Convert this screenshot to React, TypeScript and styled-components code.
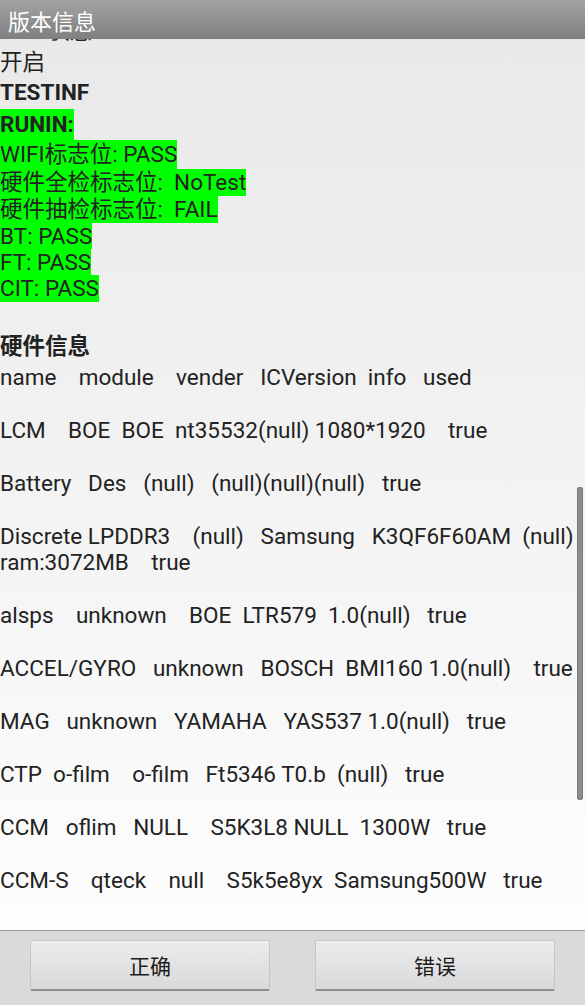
import React, { useLayoutEffect, useRef } from "react";
import styled, { createGlobalStyle } from "styled-components";

const Global = createGlobalStyle`
  html, body { margin: 0; padding: 0; width: 100%; height: 100%; overflow: hidden; }
  body { font-family: Roboto, "Noto Sans CJK SC", sans-serif; }
  #root { height: 100%; }
`;

const Screen = styled.div`
  display: flex;
  flex-direction: column;
  width: 585px;
  height: 1005px;
`;

const TitleBar = styled.header`
  flex: none;
  height: 39px;
  display: flex;
  align-items: center;
  padding-left: 8px;
  background: linear-gradient(#a3a3a3, #7f7f7f);
  color: #ffffff;
  font-family: "Noto Sans CJK SC", sans-serif;
  font-size: 22px;
`;

const Body = styled.div`
  position: relative;
  flex: 1;
  min-height: 0;
  background: linear-gradient(#e9e9e9, #fdfdfd);
`;

const Scroller = styled.div`
  height: 100%;
  overflow: hidden;
`;

const Content = styled.div`
  color: #222222;
  font-size: 22.5px;
  padding-bottom: 40px;
`;

const Line = styled.div<{ $h?: number; $bold?: boolean; $gap?: number }>`
  line-height: ${(p) => p.$h ?? 26.5}px;
  font-weight: ${(p) => (p.$bold ? 700 : 400)};
  margin-top: ${(p) => p.$gap ?? 0}px;
  white-space: pre;
`;

const MarkLine = styled(Line)`
  width: fit-content;
  background: #00ff00;
`;

const Thumb = styled.div`
  position: absolute;
  right: 2px;
  top: 448px;
  width: 6px;
  height: 313px;
  border-radius: 3px;
  background: #8d8d8d;
  box-shadow: inset 0 0 0 1px #7b7b7b;
`;

const ButtonBar = styled.footer`
  flex: none;
  height: 75px;
  box-sizing: border-box;
  border-top: 1px solid #9e9e9e;
  background: #dadada;
  display: flex;
  gap: 45px;
  padding: 9px 30px 0;
`;

const Button = styled.button`
  flex: 1;
  height: 51px;
  box-sizing: border-box;
  border: 1px solid #c6c6c6;
  border-bottom: 2px solid #8e8e8e;
  border-radius: 2px;
  background: linear-gradient(#ececec, #d9d9d9);
  color: #1c1c1c;
  font-family: "Noto Sans CJK SC", sans-serif;
  font-size: 21px;
  padding: 0;
`;

const runin = [
  "WIFI标志位: PASS",
  "硬件全检标志位:  NoTest",
  "硬件抽检标志位:  FAIL",
  "BT: PASS",
  "FT: PASS",
  "CIT: PASS",
];
const runinHeights = [29, 27, 27, 26, 26.5, 27];

const hardware = [
  "LCM    BOE  BOE  nt35532(null) 1080*1920    true",
  "Battery   Des   (null)   (null)(null)(null)   true",
  "Discrete LPDDR3    (null)   Samsung   K3QF6F60AM  (null)\nram:3072MB    true",
  "alsps    unknown    BOE  LTR579  1.0(null)   true",
  "ACCEL/GYRO   unknown   BOSCH  BMI160 1.0(null)    true",
  "MAG   unknown   YAMAHA   YAS537 1.0(null)   true",
  "CTP  o-film    o-film   Ft5346 T0.b  (null)   true",
  "CCM   oflim   NULL    S5K3L8 NULL  1300W   true",
  "CCM-S    qteck    null    S5k5e8yx  Samsung500W   true",
];

export default function App() {
  const ref = useRef<HTMLDivElement>(null);
  useLayoutEffect(() => {
    if (ref.current) ref.current.scrollTop = 25;
  }, []);

  return (
    <Screen>
      <Global />
      <TitleBar>版本信息</TitleBar>
      <Body>
        <Scroller ref={ref}>
          <Content>
            <Line $h={35}>Root状态</Line>
            <Line>开启</Line>
            <Line $bold $h={33.25}>TESTINF</Line>
            <MarkLine $bold $h={31}>RUNIN:</MarkLine>
            {runin.map((t, i) => (
              <MarkLine key={t} $h={runinHeights[i]}>{t}</MarkLine>
            ))}
            <Line $bold $h={34.75} $gap={26.5}>硬件信息</Line>
            <Line>name    module    vender   ICVersion  info   used</Line>
            {hardware.map((t) => (
              <Line key={t} $gap={26.5}>{t}</Line>
            ))}
          </Content>
        </Scroller>
        <Thumb />
      </Body>
      <ButtonBar>
        <Button>正确</Button>
        <Button>错误</Button>
      </ButtonBar>
    </Screen>
  );
}
